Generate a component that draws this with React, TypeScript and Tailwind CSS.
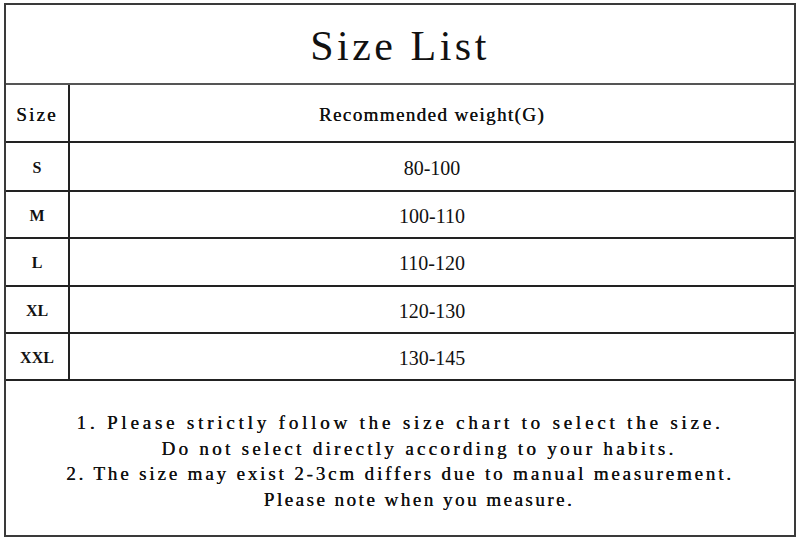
const rows = [
  { size: "S", weight: "80-100", h: "h-[49px]" },
  { size: "M", weight: "100-110", h: "h-[47px]" },
  { size: "L", weight: "110-120", h: "h-[48px]" },
  { size: "XL", weight: "120-130", h: "h-[47px]" },
  { size: "XXL", weight: "130-145", h: "h-[47px]" },
];

export default function App() {
  return (
    <div className="w-[800px] h-[544px] bg-white pl-[4px] pt-[3px] text-[#111]">
      <div className="w-[792px] h-[534px] border-2 border-[#3a3a3a] flex flex-col">
        {/* Title */}
        <div className="h-[80px] border-b-2 border-[#555] flex items-center justify-center pt-[3px]">
          <span className="font-['Liberation_Serif',serif] text-[42px] tracking-[3.5px] leading-none">
            Size List
          </span>
        </div>

        {/* Header */}
        <div className="h-[58px] border-b-2 border-[#222] flex pt-[5px]">
          <div className="w-[64px] border-r-2 border-[#222] -mt-[5px] flex items-center justify-center pt-[5px] font-['Liberation_Serif',serif] text-[19px] tracking-[2.2px] [text-shadow:0.3px_0_0_#111]">
            Size
          </div>
          <div className="flex-1 flex items-center justify-center font-['Liberation_Serif',serif] text-[19px] tracking-[1.4px] [text-shadow:0.3px_0_0_#111]">
            Recommended weight(G)
          </div>
        </div>

        {/* Rows */}
        {rows.map((r) => (
          <div key={r.size} className={`${r.h} border-b-2 border-[#222] flex`}>
            <div className="w-[64px] border-r-2 border-[#222] flex items-center justify-center pt-[2px] font-['Liberation_Serif',serif] font-bold text-[16px]">
              {r.size}
            </div>
            <div className="flex-1 flex items-center justify-center pt-[2px] font-['Liberation_Serif',serif] text-[20px]">
              {r.weight}
            </div>
          </div>
        ))}

        {/* Notes */}
        <div className="flex-1 flex flex-col items-center justify-center pt-[6px] font-['Liberation_Serif',serif] text-[19px] leading-[25.5px] whitespace-pre [text-shadow:0.3px_0_0_#111]">
          <div className="tracking-[3.8px]">1. Please strictly follow the size chart to select the size.</div>
          <div className="pl-[38px] tracking-[3.3px]">Do not select directly according to your habits.</div>
          <div className="tracking-[2.85px]">2. The size may exist 2-3cm differs due to manual measurement.</div>
          <div className="pl-[38px] tracking-[2.5px]">Please note when you measure.</div>
        </div>
      </div>
    </div>
  );
}
